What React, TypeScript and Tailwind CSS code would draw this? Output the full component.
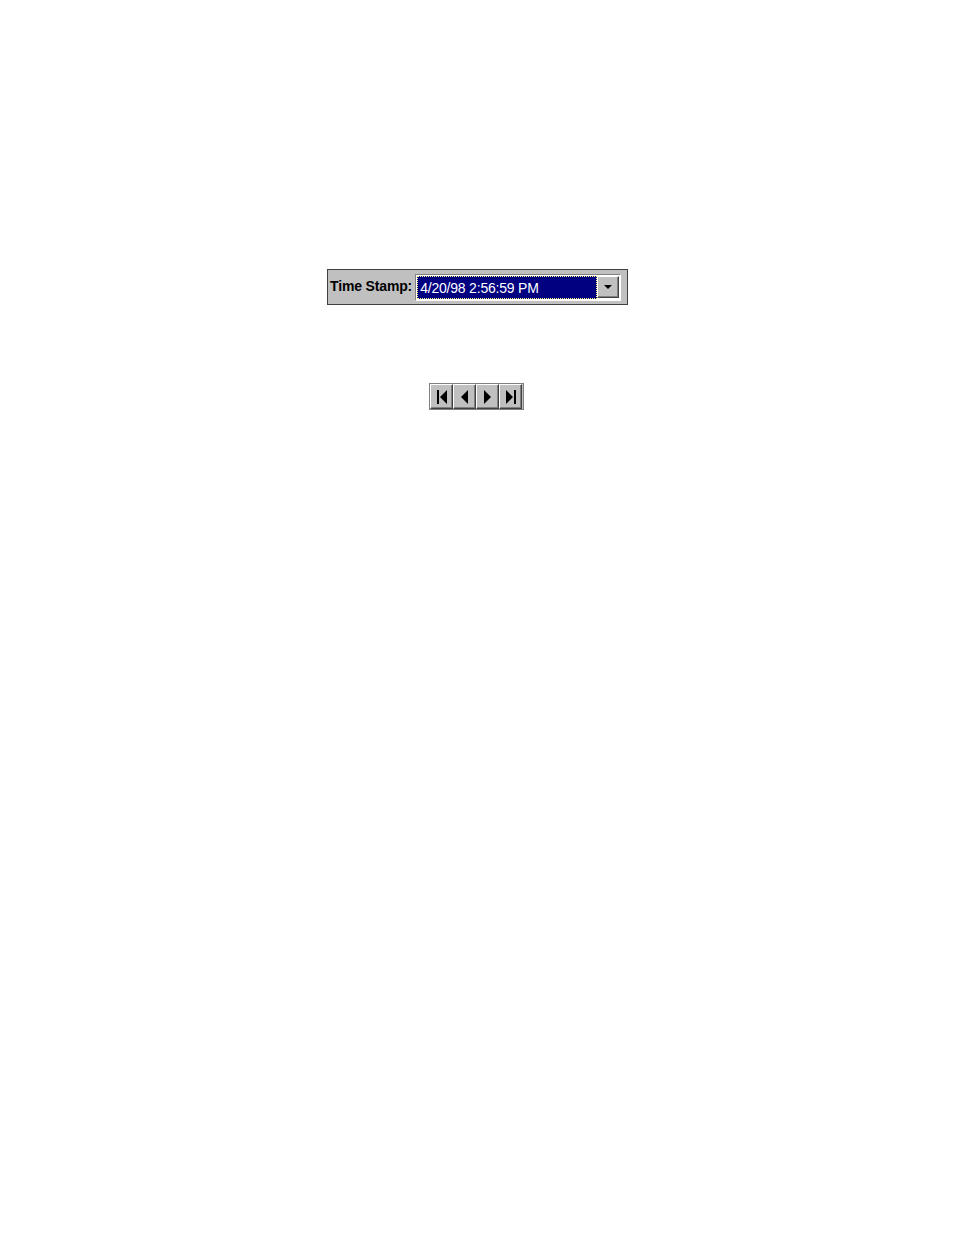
import React from 'react';

const bevelOut =
  'border border-t-white border-l-white border-r-[#404040] border-b-[#404040] shadow-[inset_-1px_-1px_0_#808080]';

function NavButton({ children }: { children: React.ReactNode }) {
  return (
    <button className={`flex h-[25px] w-[23px] items-center justify-center bg-[#c0c0c0] ${bevelOut}`}>
      {children}
    </button>
  );
}

export default function App() {
  return (
    <div className="min-h-[1235px] w-[954px] bg-white pt-[269px]" style={{ fontFamily: '"Liberation Sans", Arial, sans-serif' }}>
      {/* time stamp bar */}
      <div className="ml-[327px] flex h-[36px] w-[301px] items-center border border-[#404040] bg-[#c0c0c0] pl-[2px]">
        <span className="mb-[3px] mr-[3px] text-[14px] font-bold leading-none tracking-[-0.15px] text-black">Time Stamp:</span>
        <div className="flex h-[27px] w-[206px] items-center border border-t-[#808080] border-l-[#808080] border-r-white border-b-white bg-white p-[1px]">
          <div className="flex h-full flex-1 items-center bg-[#000080] pl-[3px] pt-[2px] outline-1 outline-dotted outline-offset-[-1px] outline-[#ffff80]">
            <span className="text-[14px] leading-none tracking-[-0.2px] text-white">4/20/98 2:56:59 PM</span>
          </div>
          <div className={`flex h-[22px] w-[22px] items-center justify-center bg-[#c0c0c0] ${bevelOut}`}>
            <svg width="8" height="4" viewBox="0 0 8 4">
              <path d="M0 0h8L4 4z" fill="#000" />
            </svg>
          </div>
        </div>
      </div>

      {/* record navigation */}
      <div className="ml-[429px] mt-[78px] flex w-[95px] border border-[#808080] bg-[#c0c0c0]">
        <NavButton>
          <svg width="10" height="14" viewBox="0 0 10 14">
            <path d="M0 0h2v14H0zM10 0v14L3 7z" fill="#000" />
          </svg>
        </NavButton>
        <NavButton>
          <svg width="7" height="14" viewBox="0 0 7 14">
            <path d="M7 0v14L0 7z" fill="#000" />
          </svg>
        </NavButton>
        <NavButton>
          <svg width="7" height="14" viewBox="0 0 7 14">
            <path d="M0 0v14l7-7z" fill="#000" />
          </svg>
        </NavButton>
        <NavButton>
          <svg width="10" height="14" viewBox="0 0 10 14">
            <path d="M0 0v14l7-7zM8 0h2v14H8z" fill="#000" />
          </svg>
        </NavButton>
      </div>
    </div>
  );
}
